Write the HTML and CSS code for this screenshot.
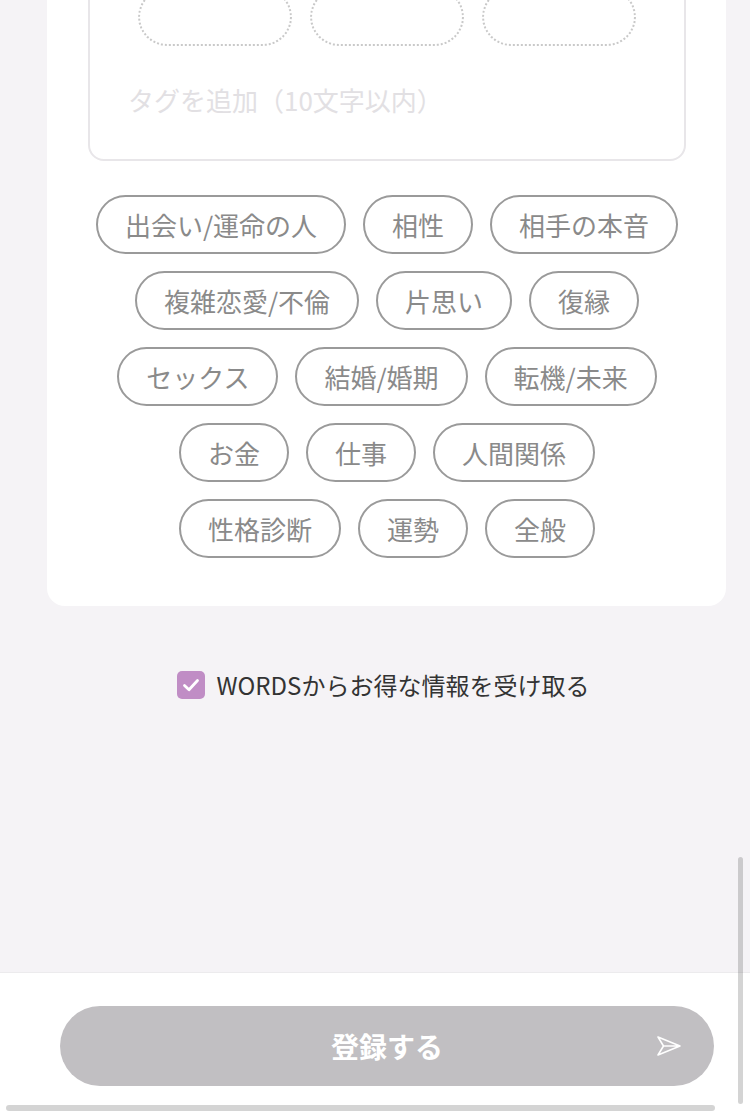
FILE: index.html
```html
<!DOCTYPE html>
<html lang="ja">

<head>
  <meta charset="UTF-8">
  <meta name="viewport" content="width=device-width, initial-scale=1.0">
  <title>登録</title>
  <link rel="stylesheet" href="styles.css">
</head>

<body>

  <div class="page">
    <main class="main">
      <section class="card">
        <div class="tag-input">
          <div class="slots">
            <span class="slot"></span>
            <span class="slot"></span>
            <span class="slot"></span>
          </div>
          <p class="placeholder">タグを追加（10文字以内）</p>
        </div>

        <ul class="tags">
          <li>出会い/運命の人</li>
          <li>相性</li>
          <li>相手の本音</li>
          <li>複雑恋愛/不倫</li>
          <li>片思い</li>
          <li>復縁</li>
          <li>セックス</li>
          <li>結婚/婚期</li>
          <li>転機/未来</li>
          <li>お金</li>
          <li>仕事</li>
          <li>人間関係</li>
          <li>性格診断</li>
          <li>運勢</li>
          <li>全般</li>
        </ul>
      </section>

      <label class="agree">
        <span class="check">
          <svg width="22" height="22" viewBox="0 0 22 22">
            <path d="M4.5 11.5 L9 15.8 L17.5 6.5" fill="none" stroke="#fff" stroke-width="2.8" stroke-linecap="round" stroke-linejoin="round" />
          </svg>
        </span>
        <span>WORDSからお得な情報を受け取る</span>
      </label>
    </main>

    <footer class="bar">
      <button class="submit">
        <span></span>
        <span class="submit-text">登録する</span>
        <svg class="send" width="26" height="22" viewBox="0 0 26 22">
          <path d="M2 2 L24 11 L2 20 L7.5 11 Z M7.5 11 L24 11" fill="none" stroke="#fff" stroke-width="1.6" stroke-linejoin="round" />
        </svg>
      </button>
    </footer>

    <div class="vscroll"></div>
    <div class="hscroll"></div>
  </div>

</body>

</html>
```

FILE: styles.css
```css
* {
  margin: 0;
  padding: 0;
  list-style: none;
  box-sizing: border-box;
}

html,
body {
  width: 100%;
  height: 100%;
}

body {
  background: #f5f3f6;
  font-family: "Noto Sans CJK JP", "Noto Sans", sans-serif;
}

.page {
  position: relative;
  width: 750px;
  height: 1116px;
  overflow: hidden;
  display: flex;
  flex-direction: column;
}

.main {
  flex: 1;
}

.card {
  width: 679px;
  margin: -54px 0 0 47px;
  padding: 20px 40px 48px 41px;
  background: #fff;
  border-radius: 18px;
}

.tag-input {
  border: 2px solid #e8e6e9;
  border-radius: 16px;
  padding: 20px 0 40px 38px;
}

.slots {
  display: flex;
  justify-content: center;
  gap: 18px;
  margin-left: -38px;
}

.slot {
  width: 154px;
  height: 58px;
  border: 2px dotted #c9c9c9;
  border-radius: 29px;
}

.placeholder {
  margin-top: 34px;
  font-size: 26px;
  line-height: 39px;
  color: #e2e0e3;
}

.tags {
  display: flex;
  flex-wrap: wrap;
  justify-content: center;
  gap: 17px 17px;
  margin: 34px 6px 0;
}

.tags li {
  height: 59px;
  padding: 0 27px;
  border: 2px solid #9a9a9a;
  border-radius: 30px;
  font-size: 26px;
  line-height: 55px;
  color: #8a8a8a;
  white-space: nowrap;
}

.agree {
  display: flex;
  align-items: center;
  justify-content: center;
  gap: 12px;
  margin: 62px 24px 0 40px;
  font-size: 24px;
  line-height: 34px;
  color: #333;
}

.check {
  display: flex;
  align-items: center;
  justify-content: center;
  width: 28px;
  height: 28px;
  border-radius: 5px;
  background: #c08dc5;
}

.bar {
  height: 144px;
  padding: 33px 36px 0 60px;
  background: #fff;
  border-top: 1px solid #ecebed;
}

.submit {
  display: grid;
  grid-template-columns: 1fr auto 1fr;
  align-items: center;
  width: 100%;
  height: 80px;
  padding: 0 32px;
  border: none;
  border-radius: 40px;
  background: #c1bfc2;
  font-family: inherit;
}

.submit-text {
  font-size: 28px;
  font-weight: bold;
  color: #fff;
}

.send {
  justify-self: end;
}

.vscroll {
  position: absolute;
  right: 7px;
  top: 857px;
  width: 5px;
  height: 247px;
  border-radius: 3px;
  background: rgba(0, 0, 0, .17);
}

.hscroll {
  position: absolute;
  left: 6px;
  bottom: 5px;
  width: 709px;
  height: 6px;
  border-radius: 3px;
  background: rgba(0, 0, 0, .17);
}
```
